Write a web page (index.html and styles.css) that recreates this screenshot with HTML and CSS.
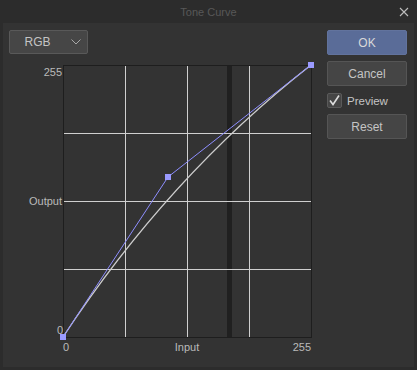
FILE: index.html
```html
<!DOCTYPE HTML>
<html>
<head>
<meta http-equiv="Content-Type" content="text/html; charset=utf-8">
<title>Tone Curve</title>
<link rel="stylesheet" href="styles.css">
</head>
<body>
<div class="window">
	<div class="titlebar">
		<span></span>
		<span class="title">Tone Curve</span>
		<span class="close">
			<svg width="10" height="10" viewBox="0 0 10 10"><path d="M1 1L9 9M9 1L1 9" stroke="#bdbdbd" stroke-width="1.1" fill="none"/></svg>
		</span>
	</div>
	<div class="main">
		<div class="left">
			<div class="select">
				<span class="select-text">RGB</span>
				<svg class="chevron" width="10" height="6" viewBox="0 0 10 6"><path d="M0.5 0.5L5 5L9.5 0.5" stroke="#a8a8a8" stroke-width="1" fill="none"/></svg>
			</div>
			<svg class="chart" width="310" height="300" viewBox="9 60 310 300">
				<rect x="227" y="65" width="5" height="272" fill="#202020"/>
				<g stroke="#d0d0d0" stroke-width="1" shape-rendering="crispEdges">
					<line x1="125.5" y1="65" x2="125.5" y2="337"/>
					<line x1="187.5" y1="65" x2="187.5" y2="337"/>
					<line x1="249.5" y1="65" x2="249.5" y2="337"/>
					<line x1="63" y1="133.5" x2="311" y2="133.5"/>
					<line x1="63" y1="201.5" x2="311" y2="201.5"/>
					<line x1="63" y1="269.5" x2="311" y2="269.5"/>
				</g>
				<rect x="63.5" y="65.5" width="248" height="272" fill="none" stroke="#1e1e1e" shape-rendering="crispEdges"/>
				<path d="M63 337 Q168 177 311 65" fill="none" stroke="#cdcdcd" stroke-width="1.3"/>
				<polyline points="63,337 168,177 311,65" fill="none" stroke="#8e8eff" stroke-width="1"/>
				<rect x="165" y="174" width="6" height="6" fill="#9a9aff"/>
				<rect x="60" y="334" width="6" height="6" fill="#9a9aff"/>
				<rect x="308" y="62" width="6" height="6" fill="#9a9aff"/>
				<g class="labels">
					<text x="62" y="76" text-anchor="end">255</text>
					<text x="62" y="205" text-anchor="end">Output</text>
					<text x="63" y="334" text-anchor="end">0</text>
					<text x="66" y="351" text-anchor="middle">0</text>
					<text x="187" y="351" text-anchor="middle">Input</text>
					<text x="311" y="351" text-anchor="end">255</text>
				</g>
			</svg>
		</div>
		<div class="right">
			<div class="btn btn-ok">OK</div>
			<div class="btn btn-cancel">Cancel</div>
			<label class="check">
				<span class="box">
					<svg width="13" height="13" viewBox="0 0 13 13"><path d="M2 6.5L5 10.5L11 1.5" stroke="#dcdcdc" stroke-width="1.6" fill="none"/></svg>
				</span>
				Preview
			</label>
			<div class="btn btn-reset">Reset</div>
		</div>
	</div>
</div>
</body>
</html>
```

FILE: styles.css
```css
body { margin:0; background:#2c2c2c; font-family:"Liberation Sans", Arial, sans-serif; font-size:11px; color:#c8c8c8; }
.window { width:417px; height:370px; box-sizing:border-box; }
.titlebar { height:23px; display:grid; grid-template-columns:1fr auto 1fr; align-items:center; }
.title { color:#585858; font-size:11px; padding-top:1px; }
.close { justify-self:end; margin-right:8px; display:flex; padding-top:1px; }
.main { margin:0 3px; height:344px; background:#333; display:flex; justify-content:space-between; padding:7px 7px 0 6px; box-sizing:border-box; }
.left { display:flex; flex-direction:column; }
.select { width:79px; height:24px; box-sizing:border-box; background:#464646; border:1px solid #595959; border-radius:2px; display:flex; align-items:center; padding:0 3px 0 0; }
.select-text { flex:1; text-align:center; font-size:12px; color:#c4c4c4; padding-right:6px; }
.chevron { margin-right:3px; }
.chart { display:block; margin-top:6px; }
.labels text { font-family:"Liberation Sans", Arial, sans-serif; font-size:11px; fill:#bababa; }
.right { width:80px; display:flex; flex-direction:column; }
.btn { height:25px; box-sizing:border-box; border:1px solid #555; border-radius:2px; background:#454545; display:flex; align-items:center; justify-content:center; font-size:12px; color:#c4c4c4; }
.btn-ok { background:#5a6c98; border-color:#62739d; color:#d8d8d8; }
.btn-cancel { margin-top:6px; }
.check { margin-top:7px; height:15px; display:flex; align-items:center; gap:5px; font-size:11.5px; color:#c4c4c4; }
.box { width:15px; height:15px; box-sizing:border-box; border:1px solid #5a5a5a; border-radius:2px; background:#454545; display:flex; align-items:center; justify-content:center; }
.btn-reset { margin-top:6px; }
```
